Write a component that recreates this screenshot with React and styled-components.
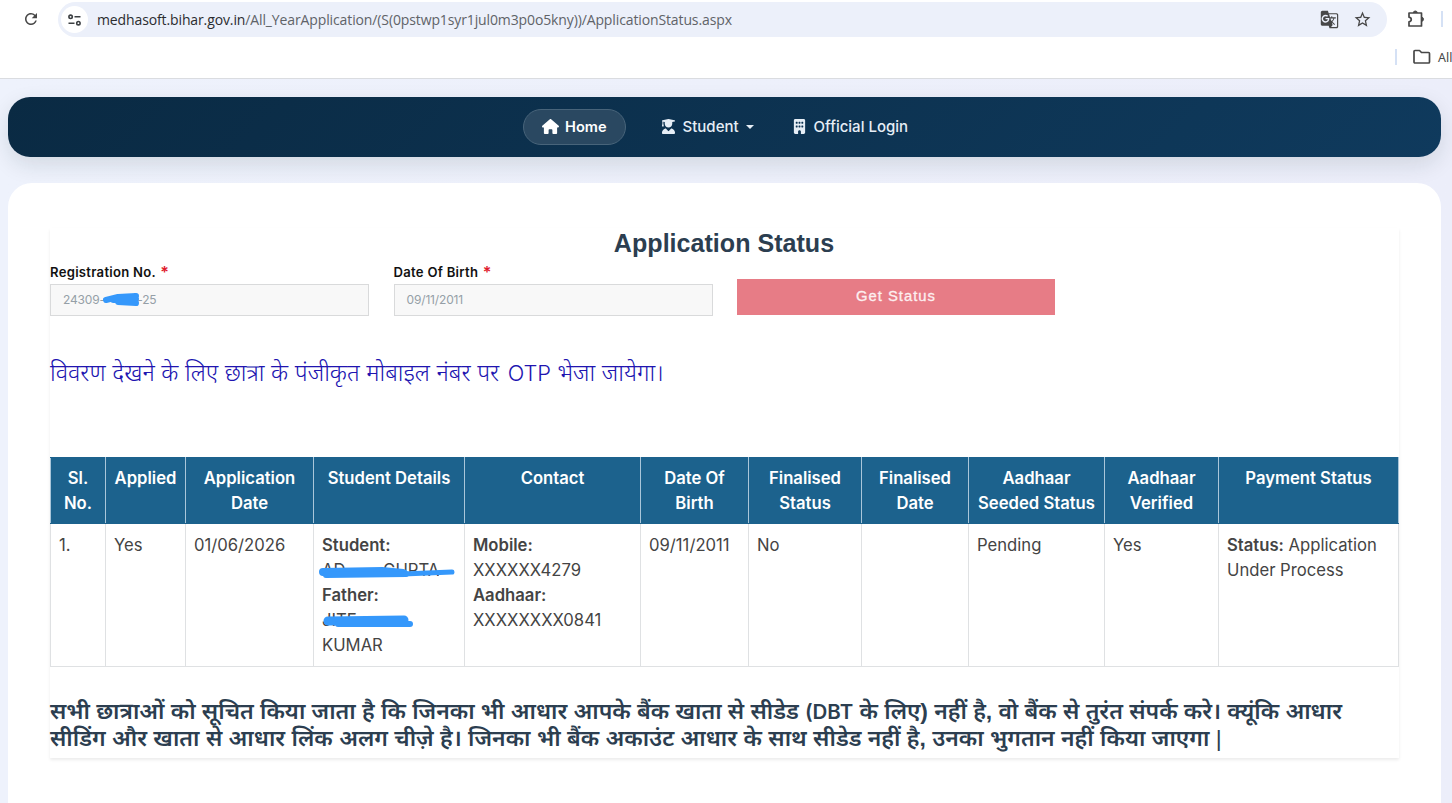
import React from "react";
import styled, { createGlobalStyle } from "styled-components";
import { FaHouse, FaUserGraduate, FaBuilding } from "react-icons/fa6";
import { MdRefresh, MdGTranslate, MdStarBorder } from "react-icons/md";

const GlobalStyle = createGlobalStyle`
* { box-sizing:border-box; }
body {
  margin:0;
  overflow:hidden;
  background-color:#eef1fb;
  font-family:Inter, "Noto Sans Devanagari", "Noto Sans", sans-serif;
}
`;

const Page = styled.div`
height:803px;
display:flex;
flex-direction:column;
overflow:hidden;
`;

const Browser = styled.header`
height:79px;
flex:none;
background-color:#fff;
border-bottom:1px solid #dadce0;
font-family:"Noto Sans", sans-serif;
overflow:hidden;
`;

const Toolbar = styled.div`
height:39px;
display:flex;
align-items:center;
padding:0 0 2px 22px;
color:#474747;

> * {
  flex-shrink:0;
}
`;

const AddressBar = styled.div`
height:35px;
width:1329px;
margin:2px 0 0 18px;
border-radius:18px;
background-color:#ecf0fa;
display:flex;
align-items:center;
padding:0 15px 0 3px;
`;

const SiteInfo = styled.span`
width:27px;
height:27px;
border-radius:50%;
background-color:#fff;
display:flex;
align-items:center;
justify-content:center;
margin-right:9px;
`;

const Url = styled.span`
flex:1;
font-family:"Open Sans", sans-serif;
font-size:14px;
letter-spacing:-0.12px;
color:#5f6368;
white-space:nowrap;

b {
  font-weight:400;
  color:#2b2c2f;
}
`;

const BarIcons = styled.div`
display:flex;
gap:14px;
`;

const Extension = styled.span`
display:flex;
margin-left:19px;
`;

const Separator = styled.span`
flex:none;
width:2px;
height:16px;
background-color:#d5e1f5;
margin-left:${(props) => props.$left || "0"};
`;

const Bookmarks = styled.div`
height:36px;
display:flex;
align-items:center;
padding-left:1395px;
gap:15px;
white-space:nowrap;
color:#474747;
font-size:12.5px;
`;

const Folder = styled.span`
display:flex;
align-items:center;
gap:6px;

svg {
  flex:none;
}
`;

const Site = styled.main`
flex:1;
padding:18px 11px 0 8px;
background:linear-gradient(90deg, #eef2fc, #eceefa);
`;

const Nav = styled.nav`
height:60px;
border-radius:22px;
background:linear-gradient(135deg, #0a2a43, #0f3a5d);
box-shadow:0 8px 22px rgba(20, 40, 40, 0.12);
display:flex;
align-items:center;
padding-left:515px;
`;

const NavItem = styled.a`
display:flex;
align-items:center;
height:36px;
padding:0 18px 1px;
gap:${(props) => (props.$active ? "6px" : "7px")};
margin-right:${(props) => props.$gap || "0"};
border:1px solid ${(props) => (props.$active ? "#48647a" : "transparent")};
border-radius:18px;
background-color:${(props) => (props.$active ? "#2a4861" : "transparent")};
color:${(props) => (props.$active ? "#fff" : "#e6eef6")};
font-size:${(props) => (props.$active ? "14.6px" : "15px")};
font-weight:${(props) => (props.$active ? 600 : 500)};
white-space:nowrap;
`;

const Caret = styled.span`
border:4px solid transparent;
border-top-color:#e6eef6;
border-bottom:0;
`;

const Card = styled.section`
height:660px;
margin-top:26px;
border-radius:24px;
background-color:#fff;
padding:45px 42px;
`;

const Panel = styled.div`
height:530px;
width:1349px;
box-shadow:0 2px 3px rgba(0, 0, 0, 0.08);
`;

const Title = styled.h1`
margin:0;
height:34px;
padding-right:1px;
color:#2c3e50;
font-family:"Liberation Sans", sans-serif;
font-size:25.1px;
line-height:30px;
text-align:center;
`;

const Form = styled.div`
display:grid;
grid-template-columns:319px 319px 318px;
column-gap:24.5px;
height:55px;
`;

const Label = styled.label`
display:block;
height:22px;
line-height:21px;
font-size:13.1px;
font-weight:600;
letter-spacing:0.28px;
color:#111;
white-space:nowrap;

sup {
  color:#e01b2c;
  font-size:16px;
  line-height:0;
  vertical-align:-1px;
  margin-left:1px;
}
`;

const Field = styled.div`
position:relative;
height:32px;
border:1px solid #d9dadb;
background-color:#f8f8f8;
padding-left:12px;
line-height:30px;
font-size:12px;
letter-spacing:-0.15px;
color:#959fa7;
white-space:pre;
`;

const Submit = styled.button`
height:36px;
margin-top:17px;
border:0;
background-color:#e77c86;
color:#fdeff0;
font-family:"Liberation Sans", sans-serif;
font-size:14.8px;
letter-spacing:1px;
padding:0 0 3px;
-webkit-text-stroke:0.3px #fdeff0;
`;

const OtpNote = styled.p`
margin:38px 0 0;
height:102px;
font-size:23.5px;
font-weight:300;
line-height:36px;
color:#2014b0;
white-space:nowrap;

span {
  font-size:21.8px;
  margin-left:2px;
  letter-spacing:-0.1px;
}
`;

const Table = styled.table`
width:1348px;
table-layout:fixed;
border-collapse:collapse;
font-size:16.67px;
line-height:25px;
color:#444;
`;

const Th = styled.th`
height:66px;
padding:8px 4px 7px;
border:1px solid #a9c6da;
border-top-color:#1c628d;
border-bottom-color:#1c628d;
background-color:#1c628d;
color:#fff;
font-weight:600;
vertical-align:top;
`;

const Td = styled.td`
height:142px;
padding:9px 3px 8px 8px;
border:1px solid #dfe1e3;
vertical-align:top;

b {
  font-weight:600;
}
`;

const Line = styled.div`
position:relative;
height:25px;
white-space:pre;
`;

const Scribble = styled.svg`
position:absolute;
left:${(props) => props.$x}px;
top:${(props) => props.$y}px;
fill:none;
stroke:#3598fb;
stroke-linecap:round;
stroke-linejoin:round;
`;

const Notice = styled.p`
margin:31px 0 0;
font-family:"Liberation Sans", "Noto Sans Devanagari", sans-serif;
font-size:22.9px;
font-weight:600;
line-height:26px;
color:#2c3e50;
white-space:nowrap;
`;

const NoticeLine = styled.span`
display:block;
letter-spacing:${(props) => props.$spacing || "normal"};
`;

const Scheme = styled.span`
font-family:Inter, sans-serif;
font-size:20.5px;
`;

const Bar = styled.span`
font-weight:400;
`;

const columns = [
  { title: "Sl. No.", width: 55 },
  { title: "Applied", width: 80 },
  { title: "Application Date", width: 128 },
  { title: "Student Details", width: 151 },
  { title: "Contact", width: 176 },
  { title: "Date Of Birth", width: 108 },
  { title: "Finalised Status", width: 113 },
  { title: "Finalised Date", width: 107 },
  { title: "Aadhaar Seeded Status", width: 136 },
  { title: "Aadhaar Verified", width: 114 },
  { title: "Payment Status", width: 180 },
];

const TuneIcon = () => (
  <svg width="13" height="12" viewBox="0 0 13 12" fill="none" stroke="#3c4043" strokeWidth="1.6">
    <circle cx="2.6" cy="2.8" r="1.7" />
    <path d="M6.5 2.8h6M.5 9.2h6" />
    <circle cx="10.4" cy="9.2" r="1.7" />
  </svg>
);

const PuzzleIcon = () => (
  <svg width="20" height="20" viewBox="0 0 20 20" fill="none" stroke="#474747" strokeWidth="1.7" strokeLinejoin="round">
    <path d="M3 4h12.5v13H3v-4.2c3-.5 3-4.1 0-4.6z" />
    <path d="M7.3 4a2 2 0 0 1 4 0M15.5 8.3a2 2 0 0 1 0 4" fill="#474747" strokeWidth="1" />
  </svg>
);

const FolderIcon = () => (
  <svg width="20" height="18" viewBox="0 0 20 18" fill="none" stroke="#474747" strokeWidth="1.7" strokeLinejoin="round">
    <path d="M2 3.5q0-1 1-1h4.5l2 2h7q1 0 1 1v8.5q0 1-1 1H3q-1 0-1-1z" />
  </svg>
);

const App = () => {
  return (
    <Page>
      <GlobalStyle />
      <Browser>
        <Toolbar>
          <MdRefresh size={18} />
          <AddressBar>
            <SiteInfo><TuneIcon /></SiteInfo>
            <Url><b>medhasoft.bihar.gov.in</b>/All_YearApplication/(S(0pstwp1syr1jul0m3p0o5kny))/ApplicationStatus.aspx</Url>
            <BarIcons>
              <MdGTranslate size={19} />
              <MdStarBorder size={19} />
            </BarIcons>
          </AddressBar>
          <Extension><PuzzleIcon /></Extension>
          <Separator $left="15px" />
        </Toolbar>
        <Bookmarks>
          <Separator />
          <Folder><FolderIcon />All</Folder>
        </Bookmarks>
      </Browser>
      <Site>
        <Nav>
          <NavItem $active $gap="16px"><FaHouse size={17} />Home</NavItem>
          <NavItem><FaUserGraduate size={15} />Student<Caret /></NavItem>
          <NavItem $gap="0"><FaBuilding size={15} />Official Login</NavItem>
        </Nav>
        <Card>
          <Panel>
            <Title>Application Status</Title>
            <Form>
              <div>
                <Label>Registration No. <sup>*</sup></Label>
                <Field>
                  24309-          -25
                  <Scribble $x={50} $y={6} width="40" height="17" strokeWidth="6">
                    <path d="M5 9 L17 6 L35 5 L12 9 L35 8 L17 11 L35 12" />
                  </Scribble>
                </Field>
              </div>
              <div>
                <Label>Date Of Birth <sup>*</sup></Label>
                <Field>09/11/2011</Field>
              </div>
              <Submit>Get Status</Submit>
            </Form>
            <OtpNote>विवरण देखने के लिए छात्रा के पंजीकृत मोबाइल नंबर पर <span>OTP</span> भेजा जायेगा।</OtpNote>
            <Table>
              <colgroup>
                {columns.map((col) => <col key={col.title} width={col.width} />)}
              </colgroup>
              <thead>
                <tr>{columns.map((col) => <Th key={col.title}>{col.title}</Th>)}</tr>
              </thead>
              <tbody>
                <tr>
                  <Td>1.</Td>
                  <Td>Yes</Td>
                  <Td>01/06/2026</Td>
                  <Td>
                    <b>Student:</b>
                    <Line>
                      AD        GUPTA
                      <Scribble $x={-4} $y={4} width="140" height="18" strokeWidth="8">
                        <path d="M5 10 L64 9 L85 11" />
                        <path d="M8 13 L88 12" strokeWidth="6" />
                        <path d="M85 12 L134 10" strokeWidth="5" />
                      </Scribble>
                    </Line>
                    <b>Father:</b>
                    <Line>
                      JITE
                      <Scribble $x={0} $y={3} width="94" height="20" strokeWidth="9">
                        <path d="M6 10 L82 9" />
                        <path d="M16 13 L88 13" strokeWidth="6" />
                      </Scribble>
                    </Line>
                    KUMAR
                  </Td>
                  <Td>
                    <b>Mobile:</b><br />XXXXXX4279<br /><b>Aadhaar:</b><br />XXXXXXXX0841
                  </Td>
                  <Td>09/11/2011</Td>
                  <Td>No</Td>
                  <Td />
                  <Td>Pending</Td>
                  <Td>Yes</Td>
                  <Td><b>Status:</b> Application Under Process</Td>
                </tr>
              </tbody>
            </Table>
            <Notice>
              <NoticeLine $spacing="-0.04px">सभी छात्राओं को सूचित किया जाता है कि जिनका भी आधार आपके बैंक खाता से सीडेड <Scheme>(DBT</Scheme> के लिए) नहीं है, वो बैंक से तुरंत संपर्क करे। क्यूंकि आधार</NoticeLine>
              <NoticeLine>सीडिंग और खाता से आधार लिंक अलग चीज़े है। जिनका भी बैंक अकाउंट आधार के साथ सीडेड नहीं है, उनका भुगतान नहीं किया जाएगा <Bar>|</Bar></NoticeLine>
            </Notice>
          </Panel>
        </Card>
      </Site>
    </Page>
  );
};

export default App;
